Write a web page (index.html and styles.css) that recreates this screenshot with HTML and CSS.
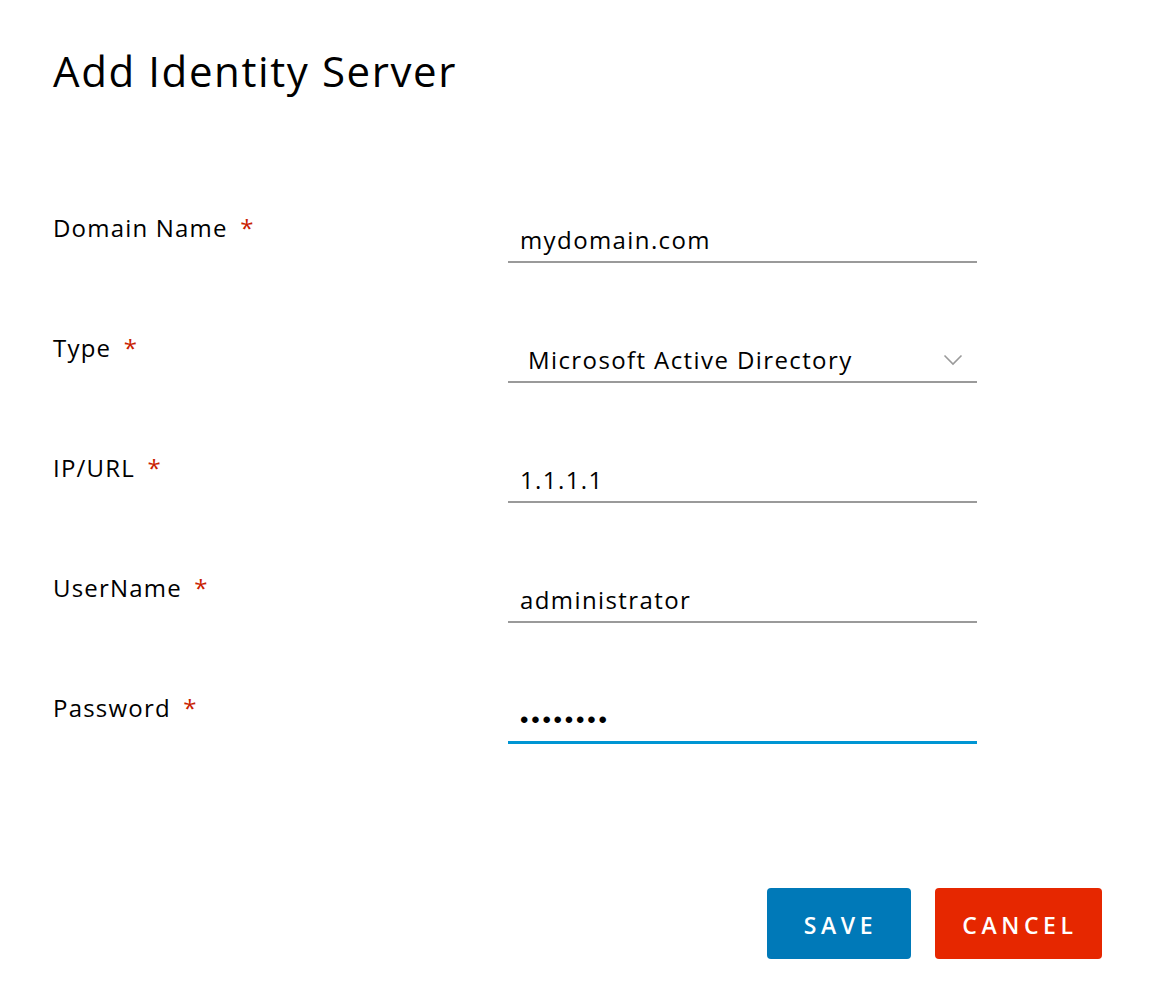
FILE: index.html
```html
<!DOCTYPE html>
<html lang="en">
<head>
<meta charset="utf-8">
<title>Add Identity Server</title>
<link rel="stylesheet" href="styles.css">
</head>
<body>
<div class="dialog">
  <h1 class="title">Add Identity Server</h1>
  <form class="form">
    <div class="row">
      <label class="label">Domain Name <span class="req">*</span></label>
      <input class="field" type="text" value="mydomain.com">
    </div>
    <div class="row">
      <label class="label">Type <span class="req">*</span></label>
      <div class="field select">
        <span>Microsoft Active Directory</span>
        <svg class="chev" width="20" height="12" viewBox="0 0 20 12"><path d="M1.5 1.5 L10 10 L18.5 1.5" fill="none" stroke="#9a9a9a" stroke-width="1.6"/></svg>
      </div>
    </div>
    <div class="row">
      <label class="label">IP/URL <span class="req">*</span></label>
      <input class="field" type="text" value="1.1.1.1">
    </div>
    <div class="row">
      <label class="label">UserName <span class="req">*</span></label>
      <input class="field" type="text" value="administrator">
    </div>
    <div class="row">
      <label class="label">Password <span class="req">*</span></label>
      <div class="field active"><span class="dots">••••••••</span></div>
    </div>
  </form>
  <div class="actions">
    <button class="btn save" type="button">SAVE</button>
    <button class="btn cancel" type="button">CANCEL</button>
  </div>
</div>
</body>
</html>
```
FILE: styles.css
```css
html, body {
  margin: 0;
  padding: 0;
  background: #ffffff;
}
body {
  font-family: "Open Sans", "Liberation Sans", sans-serif;
  color: #000;
}
.dialog {
  width: 1150px;
  height: 1004px;
  box-sizing: border-box;
  padding: 45px 48px 0 53px;
  display: flex;
  flex-direction: column;
}
.title {
  margin: 0;
  font-size: 42px;
  line-height: 52px;
  font-weight: 400;
  letter-spacing: 1.6px;
}
.form {
  margin-top: 106px;
  display: flex;
  flex-direction: column;
}
.row {
  height: 120px;
  display: grid;
  grid-template-columns: 455px 469px;
  align-items: start;
}
.label {
  padding-top: 10px;
  font-size: 24px;
  line-height: 30px;
  letter-spacing: 1.2px;
}
.req {
  color: #c92100;
  margin-left: 5px;
}
.field {
  margin-top: 14px;
  height: 46px;
  box-sizing: border-box;
  border: none;
  border-bottom: 2px solid #9a9a9a;
  padding: 0 12px;
  font-family: inherit;
  font-size: 24px;
  letter-spacing: 1.4px;
  color: #000;
  outline: none;
  background: transparent;
  width: 469px;
  display: flex;
  align-items: center;
}
.select {
  padding-left: 20px;
  padding-right: 14px;
  justify-content: space-between;
}
.chev {
  margin-top: 2px;
}
.active {
  border-bottom: 3px solid #0095d3;
  height: 47px;
  padding-top: 2px;
}
.dots {
  font-family: "Liberation Sans", sans-serif;
  font-size: 24px;
  letter-spacing: 2.8px;
}
.actions {
  margin-top: 85px;
  display: flex;
  justify-content: flex-end;
  gap: 24px;
}
.btn {
  height: 71px;
  border: none;
  border-radius: 4px;
  color: #fff;
  font-family: "Open Sans", sans-serif;
  font-weight: 600;
  font-size: 23px;
  letter-spacing: 4.6px;
  padding: 3px 0 0 3px;
  cursor: pointer;
}
.save {
  width: 144px;
  background: #0079b8;
}
.cancel {
  width: 167px;
  background: #e62700;
}
```
